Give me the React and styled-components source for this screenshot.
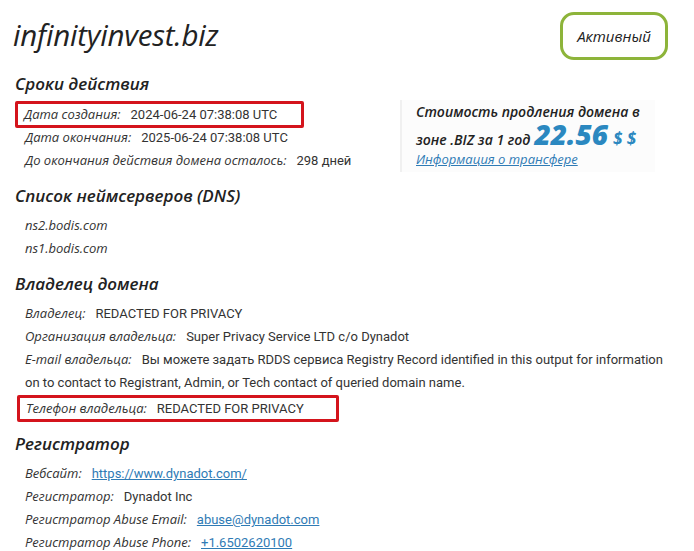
import React from "react";
import styled, { createGlobalStyle } from "styled-components";

const GlobalStyle = createGlobalStyle`
  html, body {
    margin: 0;
    padding: 0;
    background: #ffffff;
  }
  body {
    font-family: "Roboto", "Liberation Sans", sans-serif;
    color: #333;
  }
`;

const Page = styled.div`
  width: 694px;
  box-sizing: border-box;
  padding: 12px 26px 0 13px;
`;

const Header = styled.div`
  display: flex;
  justify-content: space-between;
  align-items: center;
  height: 48px;
`;

const Title = styled.h1`
  margin: -3px 0 0;
  font-family: "Open Sans", "Noto Sans", sans-serif;
  font-style: italic;
  font-weight: 500;
  font-size: 29.5px;
  letter-spacing: -0.2px;
  color: #222;
`;

const Badge = styled.div`
  width: 108px;
  height: 48px;
  box-sizing: border-box;
  border: 3px solid #8db43a;
  border-radius: 14px;
  display: flex;
  align-items: center;
  justify-content: center;
  font-family: "Open Sans", "Noto Sans", sans-serif;
  font-style: italic;
  font-weight: 500;
  font-size: 15px;
  color: #222;
`;

const TopGrid = styled.div`
  display: grid;
  grid-template-columns: 387px 255px;
  margin-top: 12px;
`;

const Section = styled.section`
  margin-top: ${(p) => (p.$first ? "0" : "12px")};
`;

const Heading = styled.h2`
  margin: 0 0 ${(p) => p.$gap || 6}px 2px;
  font-family: "Open Sans", "Noto Sans", sans-serif;
  font-style: italic;
  font-weight: 600;
  font-size: 17px;
  line-height: 24px;
  color: #222;
`;

const Row = styled.div`
  padding-left: 12px;
  font-size: 13px;
  line-height: 23px;
  color: #333;
`;

const Label = styled.span`
  font-family: "Open Sans", "Noto Sans", sans-serif;
  font-style: italic;
  font-size: 13px;
  color: #333;
  margin-right: 10px;
`;

const Mono = styled.span`
  font-family: "Open Sans", "Noto Sans", sans-serif;
  font-style: italic;
  font-size: 13px;
`;

const Highlight = styled.div`
  display: inline-block;
  border: 3px solid #d4141c;
  border-radius: 2px;
  margin: ${(p) => p.$mt || 0}px 0 -2px ${(p) => p.$ml || 2}px;
  padding: 0 ${(p) => p.$pr}px 0 6px;
  font-size: 13px;
  line-height: 21px;
`;

const Link = styled.a`
  color: #2f7bb5;
  text-decoration: underline;
`;

const PriceBox = styled.div`
  align-self: end;
  height: 72px;
  box-sizing: border-box;
  background: #fcfcfc;
  border-left: 2px solid #f0f0f0;
  padding: 1px 0 0 14px;
  font-family: "Open Sans", "Noto Sans", sans-serif;
  font-style: italic;
  font-weight: 600;
  font-size: 14px;
  color: #222;
`;

const PriceLine = styled.div`
  height: 22px;
  line-height: 22px;
  white-space: nowrap;
`;

const Price = styled.span`
  font-size: 28px;
  font-weight: 800;
  line-height: 22px;
  color: #2b88c0;
  margin-left: 4px;
`;

const Currency = styled.span`
  font-size: 17px;
  font-weight: 700;
  color: #2b88c0;
  margin-left: 5px;
`;

const PriceLink = styled(Link)`
  display: block;
  margin-top: 5px;
  font-size: 13px;
  font-weight: 400;
  line-height: 18px;
`;

export default function App() {
  return (
    <>
      <GlobalStyle />
      <Page>
        <Header>
          <Title>infinityinvest.biz</Title>
          <Badge>Активный</Badge>
        </Header>

        <TopGrid>
          <Section $first>
            <Heading $gap={5}>Сроки действия</Heading>
            <Highlight $pr={24}>
              <Label>Дата создания:</Label>2024-06-24 07:38:08 UTC
            </Highlight>
            <Row>
              <Label>Дата окончания:</Label>2025-06-24 07:38:08 UTC
            </Row>
            <Row>
              <Label>До окончания действия домена осталось:</Label>298 дней
            </Row>
          </Section>
          <PriceBox>
            <PriceLine>Стоимость продления домена в</PriceLine>
            <PriceLine>
              зоне .BIZ за 1 год<Price>22.56</Price>
              <Currency>$ $</Currency>
            </PriceLine>
            <PriceLink href="#">Информация о трансфере</PriceLink>
          </PriceBox>
        </TopGrid>

        <Section>
          <Heading>Список неймсерверов (DNS)</Heading>
          <Row><Mono>ns2.bodis.com</Mono></Row>
          <Row><Mono>ns1.bodis.com</Mono></Row>
        </Section>

        <Section>
          <Heading>Владелец домена</Heading>
          <Row>
            <Label>Владелец:</Label>REDACTED FOR PRIVACY
          </Row>
          <Row>
            <Label>Организация владельца:</Label>Super Privacy Service LTD c/o Dynadot
          </Row>
          <Row>
            <Label>E-mail владельца:</Label>Вы можете задать RDDS сервиса Registry Record
            identified in this output for information on to contact to Registrant, Admin, or
            Tech contact of queried domain name.
          </Row>
          <Highlight $pr={32} $ml={4} $mt={1}>
            <Label>Телефон владельца:</Label>REDACTED FOR PRIVACY
          </Highlight>
        </Section>

        <Section>
          <Heading>Регистратор</Heading>
          <Row>
            <Label>Вебсайт:</Label>
            <Link href="#">https://www.dynadot.com/</Link>
          </Row>
          <Row>
            <Label>Регистратор:</Label>Dynadot Inc
          </Row>
          <Row>
            <Label>Регистратор Abuse Email:</Label>
            <Link href="#">abuse@dynadot.com</Link>
          </Row>
          <Row>
            <Label>Регистратор Abuse Phone:</Label>
            <Link href="#">+1.6502620100</Link>
          </Row>
        </Section>
      </Page>
    </>
  );
}
